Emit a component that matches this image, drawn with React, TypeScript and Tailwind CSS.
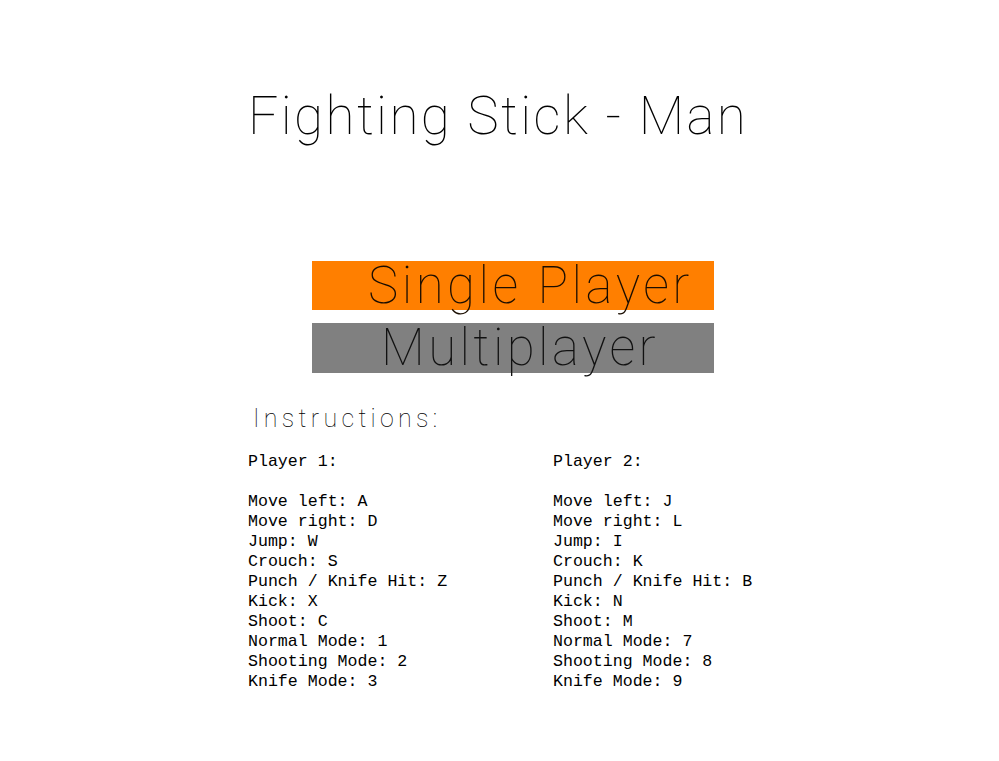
import React from "react";

const p1: string[] = [
  "Move left: A",
  "Move right: D",
  "Jump: W",
  "Crouch: S",
  "Punch / Knife Hit: Z",
  "Kick: X",
  "Shoot: C",
  "Normal Mode: 1",
  "Shooting Mode: 2",
  "Knife Mode: 3",
];

const p2: string[] = [
  "Move left: J",
  "Move right: L",
  "Jump: I",
  "Crouch: K",
  "Punch / Knife Hit: B",
  "Kick: N",
  "Shoot: M",
  "Normal Mode: 7",
  "Shooting Mode: 8",
  "Knife Mode: 9",
];

function Column({ title, lines }: { title: string; lines: string[] }) {
  return (
    <div className="flex flex-col whitespace-pre font-['Liberation_Mono',monospace] text-[16.6px] leading-[20px] text-black">
      <div>{title}</div>
      <div>&nbsp;</div>
      {lines.map((l) => (
        <div key={l}>{l}</div>
      ))}
    </div>
  );
}

export default function App() {
  return (
    <div className="min-h-[761px] w-full bg-white pl-[248px] text-black">
      <h1 className="pt-[90px] whitespace-pre font-['Roboto',sans-serif] text-[53px] font-thin leading-[53px] tracking-[2.4px]">
        Fighting Stick - Man
      </h1>
      <div className="ml-[64px] mt-[118px] flex flex-col gap-[13px]">
        <div className="flex h-[49px] w-[402px] items-start bg-[#ff7f00] pl-[56px]">
          <span className="whitespace-pre font-['Roboto',sans-serif] text-[51px] font-thin leading-[49px] tracking-[3.5px] text-[#1a0d00]">
            Single Player
          </span>
        </div>
        <div className="flex h-[50px] w-[402px] items-start bg-[#808080] pl-[69px]">
          <span className="whitespace-pre font-['Roboto',sans-serif] text-[51px] font-thin leading-[50px] tracking-[3.4px] text-[#111]">
            Multiplayer
          </span>
        </div>
      </div>
      <div className="ml-[5px] mt-[33px] whitespace-pre font-['Roboto',sans-serif] text-[25px] font-thin leading-[25px] tracking-[4.3px]">
        Instructions:
      </div>
      <div className="mt-[21px] grid grid-cols-[305px_auto]">
        <Column title="Player 1:" lines={p1} />
        <Column title="Player 2:" lines={p2} />
      </div>
    </div>
  );
}
